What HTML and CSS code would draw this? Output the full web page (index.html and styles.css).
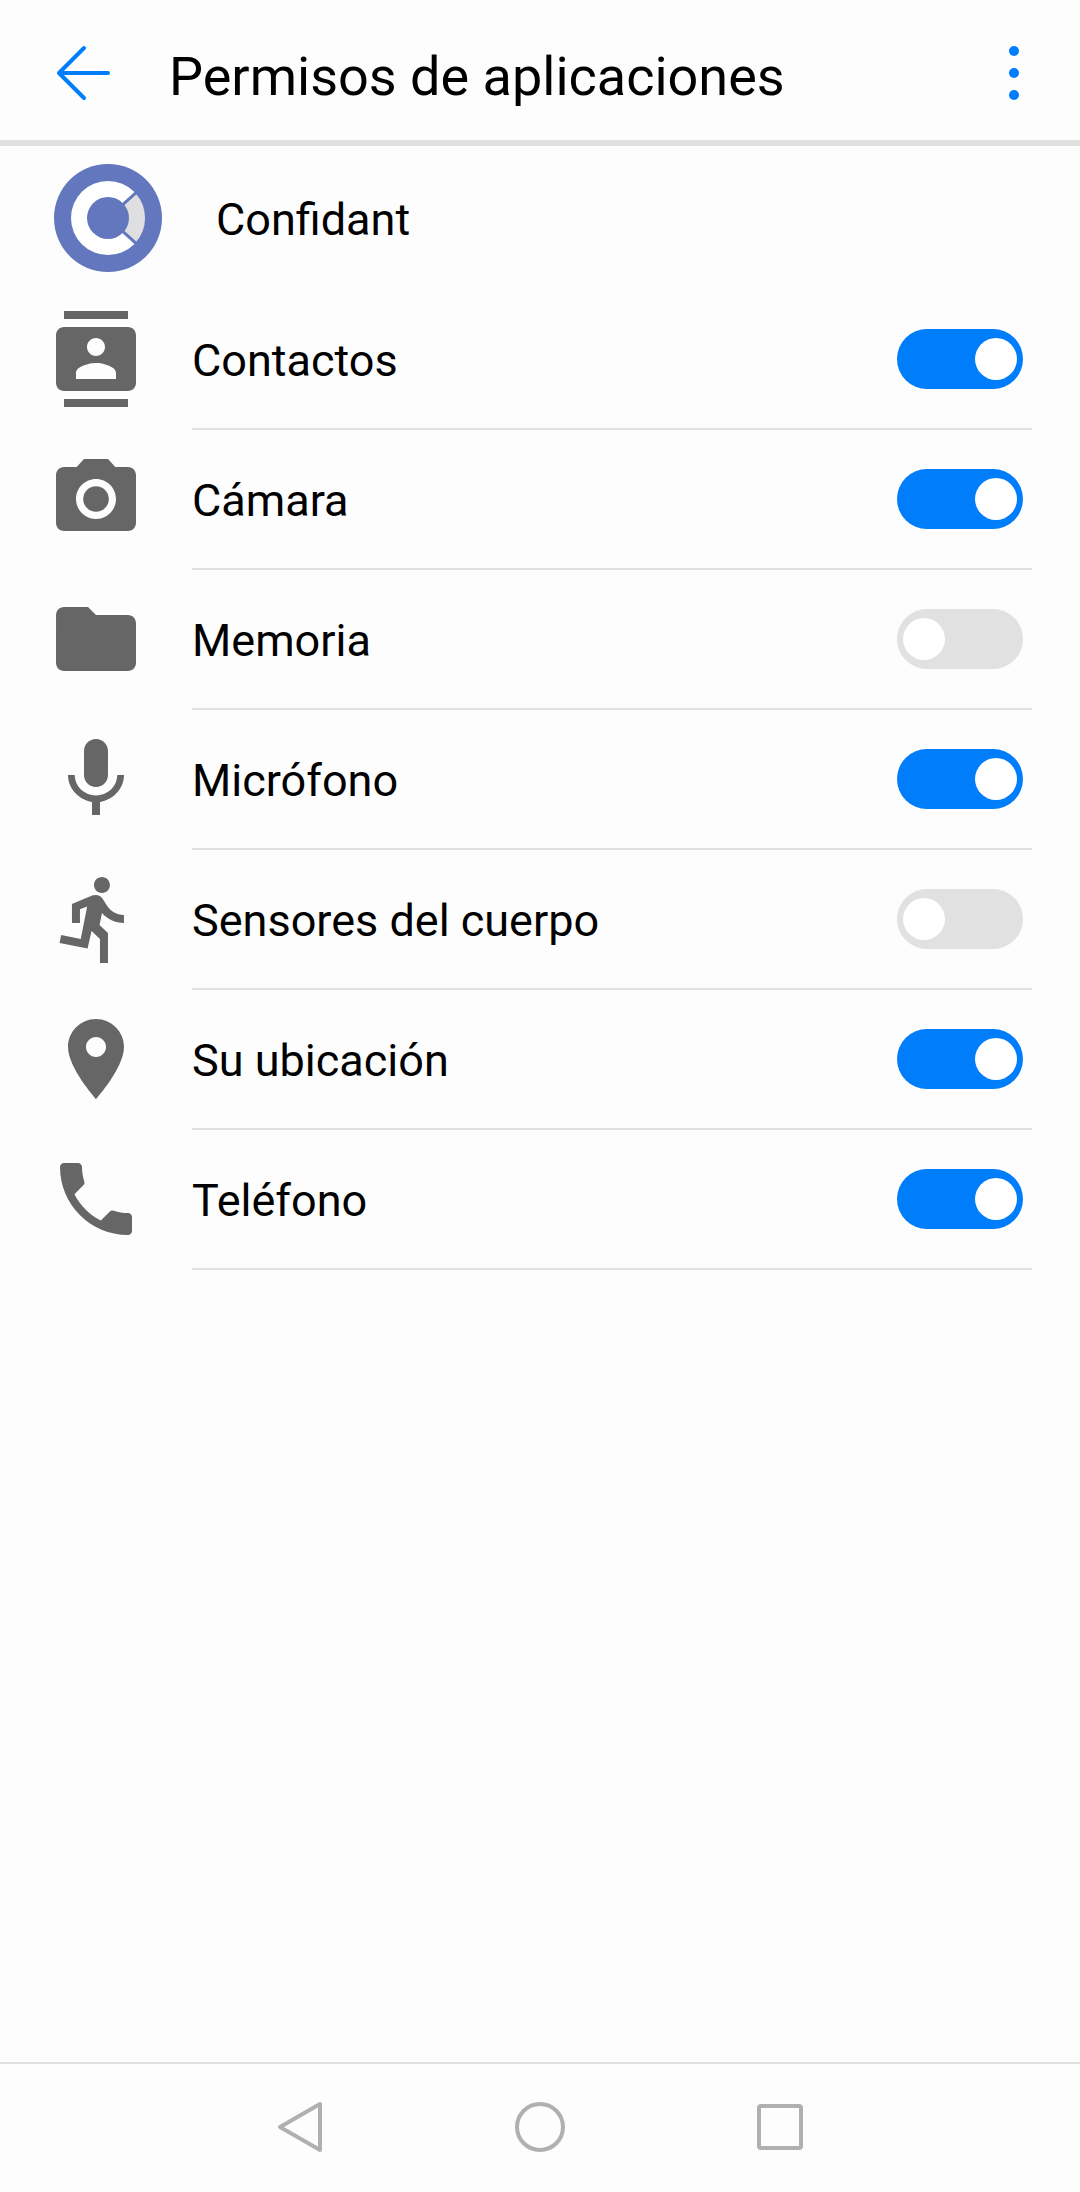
FILE: index.html
```html
<!DOCTYPE html>
<html lang="es">
<head>
  <meta charset="utf-8">
  <title>Permisos de aplicaciones</title>
  <link rel="stylesheet" href="styles.css">
</head>
<body>

<div class="screen">
  <header class="topbar">
    <svg class="back" width="60" height="60" viewBox="0 0 60 60">
      <path d="M29 5 L4 30 L29 55 M4 30 H53"/>
    </svg>
    <h1 class="title">Permisos de aplicaciones</h1>
    <div class="more"><span></span><span></span><span></span></div>
  </header>

  <main class="content">
    <div class="app-row">
      <svg class="app-logo" width="108" height="108" viewBox="0 0 108 108">
        <circle cx="54" cy="54" r="54" fill="#6277bd"/>
        <circle cx="54" cy="54" r="37" fill="#fff"/>
        <path d="M54 54 L82.6 28.2 A38.5 38.5 0 0 1 82.6 79.8 Z" fill="#dfdfe2" stroke="#6277bd" stroke-width="3"/>
        <circle cx="54" cy="54" r="21" fill="#6277bd"/>
      </svg>
      <span class="app-name">Confidant</span>
    </div>

    <!-- Lista de permisos -->
    <div class="perm">
      <svg class="icon" viewBox="0 0 24 24"><path d="M20 0H4v2h16V0zM4 24h16v-2H4v2zM20 4H4c-1.1 0-2 .9-2 2v12c0 1.1.9 2 2 2h16c1.1 0 2-.9 2-2V6c0-1.1-.9-2-2-2zm-8 2.75c1.24 0 2.25 1.01 2.25 2.25s-1.01 2.25-2.25 2.25S9.75 10.24 9.75 9 10.76 6.75 12 6.75zM17 17H7v-1.5c0-1.67 3.33-2.5 5-2.5s5 .83 5 2.5V17z"/></svg>
      <div class="perm-body">
        <span class="perm-name">Contactos</span>
        <div class="switch on"><span class="knob"></span></div>
      </div>
    </div>
    <div class="perm">
      <svg class="icon" viewBox="0 0 24 24"><path d="M12 15.2a3.2 3.2 0 1 0 0-6.4 3.2 3.2 0 0 0 0 6.4z"/><path d="M9 2L7.17 4H4c-1.1 0-2 .9-2 2v12c0 1.1.9 2 2 2h16c1.1 0 2-.9 2-2V6c0-1.1-.9-2-2-2h-3.17L15 2H9zm3 15c-2.76 0-5-2.24-5-5s2.24-5 5-5 5 2.24 5 5-2.24 5-5 5z"/></svg>
      <div class="perm-body">
        <span class="perm-name">Cámara</span>
        <div class="switch on"><span class="knob"></span></div>
      </div>
    </div>
    <div class="perm">
      <svg class="icon" viewBox="0 0 24 24"><path d="M10 4H4c-1.1 0-1.99.9-1.99 2L2 18c0 1.1.9 2 2 2h16c1.1 0 2-.9 2-2V8c0-1.1-.9-2-2-2h-8l-2-2z"/></svg>
      <div class="perm-body">
        <span class="perm-name">Memoria</span>
        <div class="switch"><span class="knob"></span></div>
      </div>
    </div>
    <div class="perm">
      <svg class="icon" viewBox="0 0 24 24"><path d="M12 14c1.66 0 2.99-1.34 2.99-3L15 5c0-1.66-1.34-3-3-3S9 3.34 9 5v6c0 1.66 1.34 3 3 3zm5.3-3c0 3-2.54 5.1-5.3 5.1S6.7 14 6.7 11H5c0 3.41 2.72 6.23 6 6.72V21h2v-3.28c3.28-.48 6-3.3 6-6.72h-1.7z"/></svg>
      <div class="perm-body">
        <span class="perm-name">Micrófono</span>
        <div class="switch on"><span class="knob"></span></div>
      </div>
    </div>
    <div class="perm">
      <svg class="icon" viewBox="0 0 24 24"><path d="M13.49 5.48c1.1 0 2-.9 2-2s-.9-2-2-2-2 .9-2 2 .9 2 2 2zm-3.6 13.9l1-4.4 2.1 2v6h2v-7.5l-2.1-2 .6-3c1.3 1.5 3.3 2.5 5.5 2.5v-2c-1.9 0-3.5-1-4.3-2.4l-1-1.6c-.4-.6-1-1-1.7-1-.3 0-.5.1-.8.1l-5.2 2.2v4.7h2v-3.4l1.8-.7-1.6 8.1-4.9-1-.4 2 7 1.4z"/></svg>
      <div class="perm-body">
        <span class="perm-name">Sensores del cuerpo</span>
        <div class="switch"><span class="knob"></span></div>
      </div>
    </div>
    <div class="perm">
      <svg class="icon" viewBox="0 0 24 24"><path d="M12 2C8.13 2 5 5.13 5 9c0 5.25 7 13 7 13s7-7.75 7-13c0-3.87-3.13-7-7-7zm0 9.5c-1.38 0-2.5-1.12-2.5-2.5s1.12-2.5 2.5-2.5 2.5 1.12 2.5 2.5-1.12 2.5-2.5 2.5z"/></svg>
      <div class="perm-body">
        <span class="perm-name">Su ubicación</span>
        <div class="switch on"><span class="knob"></span></div>
      </div>
    </div>
    <div class="perm">
      <svg class="icon" viewBox="0 0 24 24"><path d="M6.62 10.79c1.44 2.83 3.76 5.14 6.59 6.59l2.2-2.2c.27-.27.67-.36 1.02-.24 1.12.37 2.33.57 3.57.57.55 0 1 .45 1 1V20c0 .55-.45 1-1 1-9.39 0-17-7.61-17-17 0-.55.45-1 1-1h3.5c.55 0 1 .45 1 1 0 1.25.2 2.45.57 3.57.11.35.03.74-.25 1.02l-2.2 2.2z"/></svg>
      <div class="perm-body">
        <span class="perm-name">Teléfono</span>
        <div class="switch on"><span class="knob"></span></div>
      </div>
    </div>
  </main>

  <!-- Barra de navegación -->
  <nav class="navbar">
    <svg class="nav-icon" width="60" height="60" viewBox="0 0 60 60"><path d="M10 30 L50 7 V53 Z"/></svg>
    <svg class="nav-icon" width="60" height="60" viewBox="0 0 60 60"><circle cx="30" cy="30" r="23"/></svg>
    <svg class="nav-icon" width="60" height="60" viewBox="0 0 60 60"><rect x="9" y="9" width="42" height="42" rx="2"/></svg>
  </nav>
</div>

</body>
</html>
```

FILE: styles.css
```css
* {
  box-sizing: border-box;
}
body {
  margin: 0;
  background-color: #fdfdfd;
  color: #000;
  font-family: Roboto, "Liberation Sans", sans-serif;
}
.screen {
  display: flex;
  flex-direction: column;
  height: 2192px;
}

.topbar {
  display: flex;
  align-items: center;
  flex: none;
  height: 146px;
  padding: 6px 61px 0 55px;
  border-bottom: 6px solid #e0e0e0;
}
.back {
  flex: none;
  fill: none;
  stroke: #007dfa;
  stroke-width: 4;
  stroke-linecap: round;
  stroke-linejoin: round;
}
.title {
  flex: 1;
  margin: 0 0 0 54px;
  padding-top: 6px;
  font-size: 54px;
  font-weight: 400;
}
.more {
  display: flex;
  flex-direction: column;
  gap: 12px;
}
.more span {
  width: 10px;
  height: 10px;
  border-radius: 50%;
  background-color: #007dfa;
}

.content {
  flex: 1;
}
.app-row {
  display: flex;
  align-items: center;
  height: 144px;
  padding-left: 54px;
}
.app-logo {
  flex: none;
}
.app-name {
  margin-left: 54px;
  padding-top: 2px;
  font-size: 45px;
}

.perm {
  display: flex;
  height: 140px;
  padding-left: 48px;
}
.icon {
  flex: none;
  width: 96px;
  height: 96px;
  margin: 21px 48px 0 0;
  fill: #666;
}
.perm-body {
  flex: 1;
  display: flex;
  align-items: center;
  justify-content: space-between;
  margin-right: 48px;
  padding-right: 9px;
  border-bottom: 2px solid #e0e0e0;
}
.perm-name {
  padding-top: 2px;
  font-size: 45px;
}

.switch {
  display: flex;
  align-items: center;
  width: 126px;
  height: 60px;
  padding: 0 6px;
  border-radius: 30px;
  background-color: #e1e1e1;
}
.switch.on {
  justify-content: flex-end;
  background-color: #007dfa;
}
.knob {
  width: 42px;
  height: 42px;
  border-radius: 50%;
  background-color: #fff;
}

.navbar {
  display: grid;
  grid-template-columns: repeat(3, 240px);
  justify-content: center;
  justify-items: center;
  align-items: center;
  flex: none;
  height: 130px;
  padding-bottom: 2px;
  border-top: 2px solid #e0e0e0;
}
.nav-icon {
  fill: none;
  stroke: #b0b0b0;
  stroke-width: 4;
  stroke-linejoin: round;
}
```
